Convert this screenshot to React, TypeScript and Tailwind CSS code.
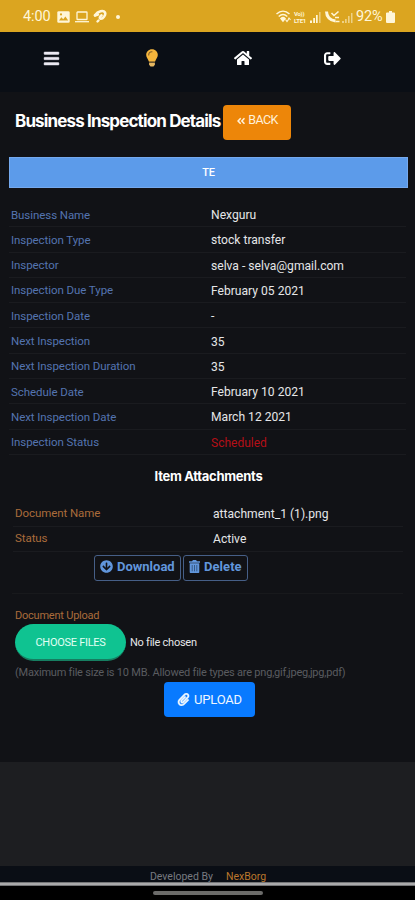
import React from 'react';
import { FaBars, FaHome, FaSignOutAlt, FaAngleDoubleLeft, FaArrowCircleDown, FaPaperclip } from 'react-icons/fa';

const details: { label: string; value: string; red?: boolean }[] = [
  { label: 'Business Name', value: 'Nexguru' },
  { label: 'Inspection Type', value: 'stock transfer' },
  { label: 'Inspector', value: 'selva - selva@gmail.com' },
  { label: 'Inspection Due Type', value: 'February 05 2021' },
  { label: 'Inspection Date', value: '-' },
  { label: 'Next Inspection', value: '35' },
  { label: 'Next Inspection Duration', value: '35' },
  { label: 'Schedule Date', value: 'February 10 2021' },
  { label: 'Next Inspection Date', value: 'March 12 2021' },
  { label: 'Inspection Status', value: 'Scheduled', red: true },
];

function StatusBar() {
  return (
    <header className="flex h-8 items-center bg-[#dba520] pl-[23px] pr-[20px] pt-[1px] text-[#fff6d8]">
      <span className="w-[33px] pt-[2px] text-[14.5px] leading-none tracking-[-0.1px]">4:00</span>
      <svg className="ml-[1px] h-[12px] w-[13px]" viewBox="0 0 13 12">
        <rect x="0.3" y="0.3" width="12.4" height="11.4" rx="1.3" fill="currentColor" />
        <path d="M2 9.5l2.4-3.2 1.8 1.9 2.2-2.7 2.8 4z" fill="#dba520" />
        <circle cx="4" cy="3.4" r="1.1" fill="#dba520" />
      </svg>
      <svg className="ml-[5px] h-[12px] w-[14px]" viewBox="0 0 14 12" fill="none" stroke="currentColor" strokeWidth="1.3">
        <rect x="2" y="1" width="10" height="7.5" rx="0.6" />
        <path d="M0 10.7h14" />
      </svg>
      <svg className="ml-[4px] h-[15px] w-[14px]" viewBox="0 0 14 15" fill="none" stroke="currentColor" strokeLinecap="round">
        <path d="M2 6.2C5 2 10.5.9 12 3.5c1.2 2.6-2.3 6.5-4.3 6.2-1.5-.3-.7-2.5.8-3.4" strokeWidth="2.6" />
        <path d="M2 6.5l3-1M4.5 12.5l1-1" strokeWidth="2.4" />
      </svg>
      <span className="ml-[9px] size-[4px] rounded-full bg-current" />
      <div className="ml-auto flex items-center">
        <svg className="h-[13px] w-[15px]" viewBox="0 0 15 13" fill="none" stroke="currentColor" strokeWidth="1.5">
          <path d="M.5 4c4-3.7 9-3.7 13 0M2.7 6.5c2.8-2.6 5.8-2.6 8.6 0" />
          <path d="M5 8.5c1.3-1.2 2.8-1.2 4 0L7 11z" fill="currentColor" />
          <path d="M9.5 9.5l1.5 2 1.5-2M12 10l1-2 1.5 2" strokeWidth="1.1" />
        </svg>
        <span className="ml-[3px] flex w-[15px] flex-col text-[6px] font-bold leading-[7px] tracking-[-0.3px]">
          <span>Vo))</span>
          <span>LTE1</span>
        </span>
        <svg className="ml-[1px] h-[12px] w-[11px]" viewBox="0 0 11 12" fill="currentColor">
          <path d="M0 9.5h2V12H0zM3.2 7H5v5H3.2zM6 4h1.7v8H6z" />
          <path d="M9 1h1.6v11H9z" opacity=".5" />
        </svg>
        <svg className="ml-[4px] h-[13px] w-[15px]" viewBox="0 0 15 13" fill="none" stroke="currentColor">
          <path d="M1.5 1.5c0 5 3.5 9 9 9.5" strokeWidth="3" />
          <path d="M6.5 3L9 5.5l4.5-4M10 7.5h4M10.5 11.5h4" strokeWidth="1.6" />
        </svg>
        <svg className="ml-[2px] h-[12px] w-[11px]" viewBox="0 0 11 12" fill="currentColor" opacity=".55">
          <path d="M0 10h2v2H0zM3 8h1.7v4H3zM6 5h1.6v7H6zM9 2h1.5v10H9z" />
        </svg>
        <span className="ml-[3px] w-[30px] whitespace-nowrap pt-[2px] text-[14.5px] leading-none tracking-[-0.2px]">92%</span>
        <svg className="h-[12px] w-[9px]" viewBox="0 0 9 13" preserveAspectRatio="none" fill="currentColor">
          <path d="M3 0h3v1.5h2c.6 0 1 .4 1 1V12c0 .6-.4 1-1 1H1c-.6 0-1-.4-1-1V2.500c0-.6.4-1 1-1h2z" />
        </svg>
      </div>
    </header>
  );
}

function Bulb() {
  return (
    <svg className="h-[18px] w-[12px]" viewBox="0 0 12 18">
      <path d="M6 .3C2.7.3.2 2.8.2 6c0 2.7 2 4 2.8 6.7h6C9.8 10 11.8 8.7 11.8 6 11.8 2.8 9.3.3 6 .3z" fill="#f5b53c" />
      <path d="M2.7 6C2.7 4.1 4.1 2.7 6 2.7" fill="none" stroke="#805c27" strokeWidth="1.1" strokeLinecap="round" />
      <path d="M3 12.7h6v1H3z" fill="#58472b" />
      <path d="M3.1 13.7h5.8v2l-1.400 1.800h-3L3.100 15.700z" fill="#e6b761" />
    </svg>
  );
}

function Nav() {
  return (
    <nav className="flex h-[60px] bg-[#0a0e15] pt-[17px] text-white">
      <div className="ml-[43px] flex h-[18px] w-4 items-center justify-center"><FaBars className="size-[17px] shrink-0 text-[#ece9f3]" stroke="currentColor" strokeWidth={14} /></div>
      <div className="ml-[86px] flex h-[18px] w-[14px] items-center justify-center"><Bulb /></div>
      <div className="ml-[74px] flex h-[18px] w-[19px] items-center justify-center"><FaHome className="size-[18px] shrink-0" /></div>
      <div className="ml-[71px] flex h-[18px] w-[18px] items-center justify-center"><FaSignOutAlt className="size-[17px] shrink-0" /></div>
    </nav>
  );
}

function TrashIcon() {
  return (
    <svg className="h-[13px] w-[11px]" viewBox="0 0 11 13" fill="currentColor">
      <path d="M0 1.2h3L4 0h3l1 1.2h3v1.6H0z" />
      <path d="M.7 3.2h9.6V12c0 .6-.4 1-1 1H1.7c-.6 0-1-.4-1-1z" />
      <path d="M3.2 5v6.3M5.5 5v6.3M7.8 5v6.3" stroke="#25405f" strokeWidth=".7" />
    </svg>
  );
}

export default function App() {
  return (
    <div className="flex h-[900px] w-[415px] flex-col overflow-hidden bg-[#1d1e21] font-['Roboto',sans-serif] text-[11.5px] text-[#e5e6e8]">
      <StatusBar />
      <Nav />
      <main className="h-[670px] shrink-0 bg-[#111216] pt-3">
        <div className="flex h-9 items-center pl-[15px]">
          <h1 className="w-[208px] whitespace-nowrap pb-[1px] font-['Inter',sans-serif] text-[17px] font-bold leading-none tracking-[-0.86px] text-white">Business Inspection Details</h1>
          <button className="flex h-[35px] w-[68px] items-center justify-center gap-[2px] rounded bg-[#ed8609] pb-[3px] text-[12.5px] tracking-[-0.6px] text-[#fff1db]">
            <FaAngleDoubleLeft className="size-[10px]" />BACK
          </button>
        </div>
        <div className="ml-[9px] mt-[17px] flex h-[31px] w-[399px] items-center justify-center border border-[#75a9ee] bg-[#5c9bea] pt-[1px] text-[11px] font-medium tracking-[-0.3px] text-white">TE</div>
        <dl className="ml-[9px] mt-[14px] w-[397px]">
          {details.map((row) => (
            <div key={row.label} className="flex h-[25.3px] items-center border-b border-[#1a1b1f] pl-[2px] pt-[2px]">
              <dt className="w-[200px] tracking-[-0.07px] text-[#5474b0]">{row.label}</dt>
              <dd className={row.red ? 'text-[12px] text-[#b50f17]' : 'text-[12.1px]'}>{row.value}</dd>
            </div>
          ))}
        </dl>
        <h2 className="flex h-[47px] items-center justify-center whitespace-nowrap pb-[4px] pl-[2px] font-['Inter',sans-serif] text-[13px] font-bold tracking-[-0.3px] text-white">Item Attachments</h2>
        <dl className="ml-[13px] w-[390px]">
          <div className="flex h-[25px] items-center border-b border-[#1a1b1f] pl-[2px]">
            <dt className="w-[198px] tracking-[-0.07px] text-[#aa6c3b]">Document Name</dt>
            <dd className="text-[12.1px]">attachment_1 (1).png</dd>
          </div>
          <div className="flex h-[25px] items-center border-b border-[#1a1b1f] pl-[2px]">
            <dt className="w-[198px] tracking-[-0.07px] text-[#aa6c3b]">Status</dt>
            <dd className="text-[12.1px]">Active</dd>
          </div>
        </dl>
        <div className="ml-[94px] mt-[3px] flex gap-[2px] text-[13px] font-bold text-[#6196dc]">
          <button className="flex h-[26px] w-[87px] items-center gap-[4px] whitespace-nowrap rounded-[3px] border border-[#465f87] pb-[2px] pl-[5px]"><FaArrowCircleDown className="size-[13px] shrink-0" />Download</button>
          <button className="flex h-[26px] w-[65px] items-center gap-[4px] whitespace-nowrap rounded-[3px] border border-[#465f87] pb-[2px] pl-[5px] tracking-[0.05px]"><TrashIcon />Delete</button>
        </div>
        <section className="mx-3 mt-[12px] border-t border-[#18191c] pl-[3px] pt-[15px]">
          <div className="flex h-[13px] items-center pt-[1px] text-[11px] tracking-[-0.22px] text-[#aa6c3b]">Document Upload</div>
          <div className="mt-[2px] flex h-[38px] items-center">
            <button className="h-[37px] w-[111px] rounded-full border-b-2 border-[#167e61] bg-[#0fc391] pt-[2px] text-[11px] tracking-[-0.28px] text-[#e1fff3]">CHOOSE FILES</button>
            <span className="ml-1 text-[11px] tracking-[-0.25px]">No file chosen</span>
          </div>
          <p className="mt-[2px] flex h-[17px] items-center whitespace-nowrap pt-[1px] text-[11px] tracking-[-0.22px] text-[#5a5c60]">(Maximum file size is 10 MB. Allowed file types are png,gif,jpeg,jpg,pdf)</p>
          <button className="ml-[149px] mt-[1px] flex h-[35px] w-[91px] items-center justify-center gap-[4px] rounded bg-[#087aff] text-[13px] tracking-[-0.2px] text-[#eef7ff]">
            <FaPaperclip className="size-[13px] shrink-0" strokeWidth={12} stroke="currentColor" />UPLOAD
          </button>
        </section>
      </main>
      <div className="h-[104px] shrink-0" />
      <footer className="flex h-[16px] shrink-0 items-center justify-center gap-[13px] bg-[#0a0e15] pt-[5px] pl-[1px] text-[10.5px]">
        <span className="text-[#777a80]">Developed By</span>
        <span className="text-[#bb772c]">NexBorg</span>
      </footer>
      <div className="h-[4px] shrink-0 border-y border-[#747577] bg-[#aaaaab]" />
      <div className="flex h-[14px] shrink-0 justify-center bg-black pt-[5px]">
        <div className="h-[4px] w-[110px] rounded-sm bg-[#6b6b69]" />
      </div>
    </div>
  );
}
